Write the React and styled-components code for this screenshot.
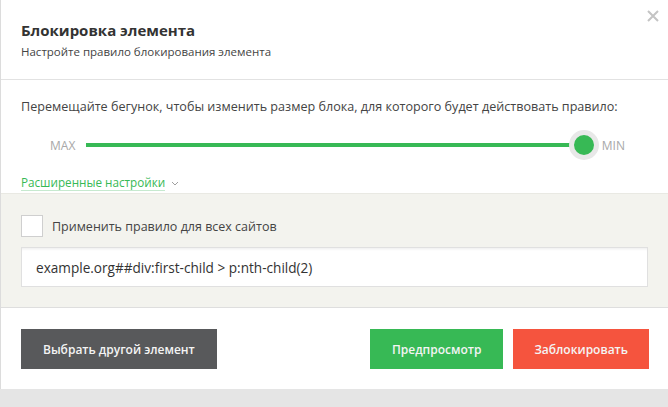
import React from 'react';
import styled, { createGlobalStyle } from 'styled-components';

const GlobalStyle = createGlobalStyle`
    body {
        margin: 0;
        background: #e5e5e5;
        font-family: "Open Sans", "Liberation Sans", sans-serif;
    }
`

const Modal = styled.div`
    position: relative;
    width: 667px;
    background: #fff;
    border-left: 1px solid #dcdcdc;
`

const Header = styled.div`
    padding: 20px 20px 19px;
    border-bottom: 1px solid #e2e2e2;
`

const Title = styled.h1`
    margin: 0;
    font-size: 15px;
    line-height: 20px;
    font-weight: 700;
    color: #333;
`

const Subtitle = styled.p`
    margin: 4px 0 0;
    font-size: 11.5px;
    line-height: 16px;
    color: #444;
`

const Close = styled.button`
    position: absolute;
    top: 10px;
    right: 9px;
    width: 12px;
    height: 12px;
    padding: 0;
    border: none;
    background: none;
    display: flex;
`

const Settings = styled.div`
    padding: 18px 20px 1px;
`

const Hint = styled.p`
    margin: 0;
    font-size: 12.6px;
    line-height: 18px;
    color: #444;
`

const SliderRow = styled.div`
    display: flex;
    align-items: center;
    height: 30px;
    margin-top: 14px;
    padding: 0 23px 0 29px;
`

const Edge = styled.span`
    font-size: 12px;
    color: #a8a8a8;
    margin-left: ${p => p.$left || 0}px;
    margin-right: ${p => p.$right || 0}px;
`

const Track = styled.div`
    position: relative;
    flex: 1;
    height: 4px;
    background: #37b955;
`

const Thumb = styled.div`
    position: absolute;
    right: -17px;
    top: -13px;
    width: 20px;
    height: 20px;
    border-radius: 50%;
    background: #37b955;
    border: 5px solid #e8e8e8;
`

const MoreLink = styled.div`
    display: flex;
    align-items: center;
    gap: 6px;
    margin-top: 14px;
    height: 18px;
    font-size: 11.7px;
    color: #37b955;
`

const LinkText = styled.span`
    line-height: 15px;
    border-bottom: 1px solid #c6e9cf;
`

const RuleBox = styled.div`
    background: #f3f3ee;
    border-top: 1px solid #e9e9e3;
    border-bottom: 1px solid #dedede;
    padding: 21px 20px 20px;
`

const CheckRow = styled.label`
    display: flex;
    align-items: center;
    gap: 9px;
    font-size: 12.5px;
    color: #444;
`

const Box = styled.span`
    box-sizing: border-box;
    width: 22px;
    height: 22px;
    background: #fff;
    border: 1px solid #cfcfcf;
`

const RuleInput = styled.div`
    box-sizing: border-box;
    margin-top: 10px;
    height: 40px;
    padding: 0 14px;
    display: flex;
    align-items: center;
    background: #fff;
    border: 1px solid #e0e0e0;
    box-shadow: inset 0 3px 3px -2px #ececec;
    font-size: 13.6px;
    color: #333;
`

const Footer = styled.div`
    display: flex;
    align-items: center;
    padding: 21px 19px 20px 20px;
`

const Button = styled.button`
    height: 40px;
    padding: 0 ${p => p.$pad || 21}px;
    border: none;
    background: ${p => p.$bg};
    color: #f4f4f4;
    font-family: inherit;
    font-size: 12px;
    font-weight: 600;
    margin-left: ${p => p.$ml || 0}px;
`

const Spacer = styled.div`
    flex: 1;
`

export default function App() {
    return (
        <>
            <GlobalStyle />
            <Modal>
                <Header>
                    <Title>Блокировка элемента</Title>
                    <Subtitle>Настройте правило блокирования элемента</Subtitle>
                </Header>
                <Close aria-label="close">
                    <svg width="12" height="12" viewBox="0 0 12 12">
                        <path d="M1 1L11 11M11 1L1 11" stroke="#c4c4c4" strokeWidth="2" />
                    </svg>
                </Close>
                <Settings>
                    <Hint>Перемещайте бегунок, чтобы изменить размер блока, для которого будет действовать правило:</Hint>
                    <SliderRow>
                        <Edge $right={11}>MAX</Edge>
                        <Track>
                            <Thumb />
                        </Track>
                        <Edge $left={20}>MIN</Edge>
                    </SliderRow>
                    <MoreLink>
                        <LinkText>Расширенные настройки</LinkText>
                        <svg width="8" height="5" viewBox="0 0 8 5">
                            <path d="M1 1L4 4L7 1" fill="none" stroke="#a0a0a0" strokeWidth="1" />
                        </svg>
                    </MoreLink>
                </Settings>
                <RuleBox>
                    <CheckRow>
                        <Box />
                        Применить правило для всех сайтов
                    </CheckRow>
                    <RuleInput>example.org##div:first-child &gt; p:nth-child(2)</RuleInput>
                </RuleBox>
                <Footer>
                    <Button $bg="#58595b" $pad={22}>Выбрать другой элемент</Button>
                    <Spacer />
                    <Button $bg="#37b955" $pad={22}>Предпросмотр</Button>
                    <Button $bg="#f5543e" $ml={10}>Заблокировать</Button>
                </Footer>
            </Modal>
        </>
    );
}
